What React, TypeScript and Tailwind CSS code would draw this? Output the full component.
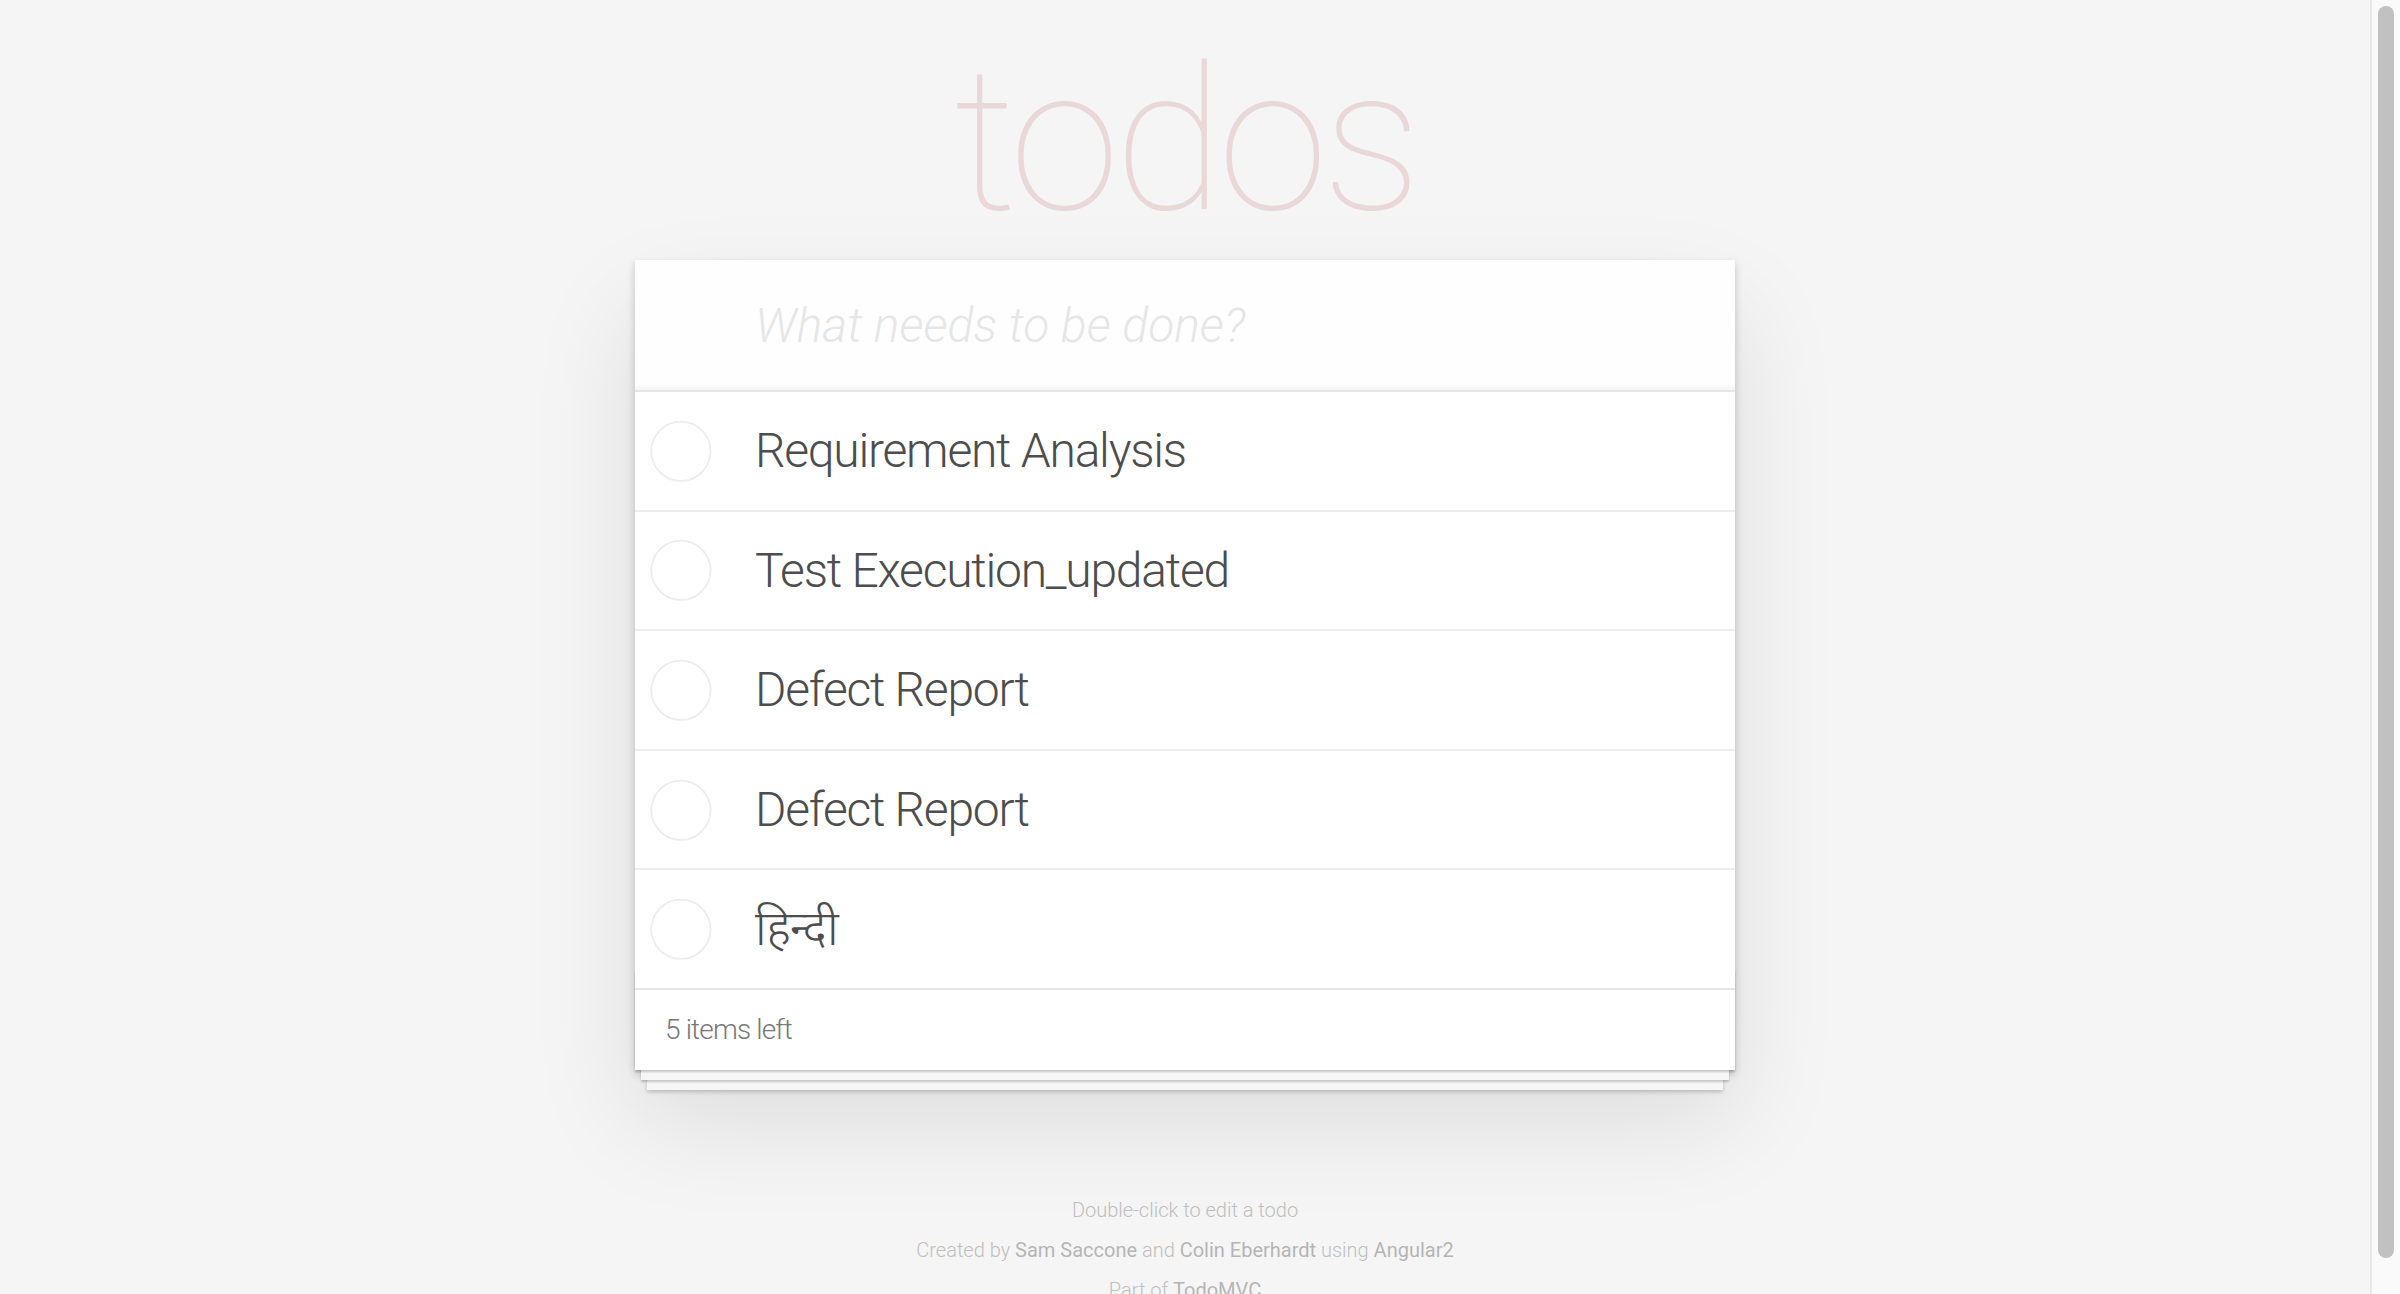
import React from 'react';

const todos = ['Requirement Analysis', 'Test Execution_updated', 'Defect Report', 'Defect Report', 'हिन्दी'];

// empty toggle circle, same geometry as the old todomvc svg
const Toggle = () => (
  <svg width="80" height="80" viewBox="-10 -18 100 135" className="absolute left-0 top-1/2 -translate-y-1/2">
    <circle cx="50" cy="50" r="50" fill="none" stroke="#ededed" strokeWidth="3" />
  </svg>
);

export default function App() {
  return (
    <div className="h-screen w-full overflow-hidden flex bg-[#f5f5f5] text-[#4d4d4d] font-light font-[Roboto,'Noto_Sans_Devanagari','Noto_Sans',sans-serif]">
      <div className="flex-1 flex flex-col items-center">
        <div className="w-[1100px]">
          <h1 className="mt-[41px] h-[200px] text-center text-[200px] leading-[200px] font-thin tracking-[-0.028em] text-[rgba(175,47,47,0.15)]">
            todos
          </h1>

          <section className="relative mt-[19px] bg-white shadow-[0_4px_8px_0_rgba(0,0,0,0.2),0_50px_100px_0_rgba(0,0,0,0.1)]">
            <header>
              <input
                className="block w-full h-[130px] pl-[120px] pr-[32px] text-[48px] leading-[1.4] outline-none bg-[rgba(0,0,0,0.003)] shadow-[inset_0_-4px_2px_rgba(0,0,0,0.03)] placeholder:italic placeholder:font-light placeholder:text-[#e6e6e6]"
                placeholder="What needs to be done?"
              />
            </header>

            <ul className="border-t-2 border-[#e6e6e6]">
              {todos.map((t, i) => (
                <li key={i} className={`relative text-[48px] ${i < todos.length - 1 ? 'border-b-2 border-[#ededed]' : ''}`}>
                  <Toggle />
                  <label className="block ml-[90px] py-[30px] pl-[30px] pr-[120px] leading-[1.2] tracking-[-0.026em] break-all">{t}</label>
                </li>
              ))}
            </ul>

            <footer className="relative h-[82px] border-t-2 border-[#e6e6e6] px-[30px] flex items-center text-[28px] tracking-[-0.03em] text-[#777]">
              <div className="absolute inset-x-0 bottom-0 h-[100px] pointer-events-none shadow-[0_2px_2px_rgba(0,0,0,0.2),0_16px_0_-6px_#f6f6f6,0_18px_2px_-6px_rgba(0,0,0,0.2),0_32px_0_-12px_#f6f6f6,0_34px_4px_-12px_rgba(0,0,0,0.2)]" />
              <span className="relative">5 items left</span>
            </footer>
          </section>

          <footer className="mt-[130px] text-center text-[20px] leading-none text-[#bfbfbf]">
            <p>Double-click to edit a todo</p>
            <p className="mt-[20px]">
              Created by <a className="font-normal text-[#b5b5b5]">Sam Saccone</a> and{' '}
              <a className="font-normal text-[#b5b5b5]">Colin Eberhardt</a> using{' '}
              <a className="font-normal text-[#b5b5b5]">Angular2</a>
            </p>
            <p className="mt-[20px]">
              Part of <a className="font-normal text-[#b5b5b5]">TodoMVC</a>
            </p>
          </footer>
        </div>
      </div>

      {/* scrollbar */}
      <div className="w-[30px] h-full bg-[#fafafa] border-l-2 border-[#e8e8e8] pl-[6px] pr-[6px] pt-[6px] pb-[36px]">
        <div className="h-full w-[16px] rounded-full bg-[#c1c1c1]" />
      </div>
    </div>
  );
}
